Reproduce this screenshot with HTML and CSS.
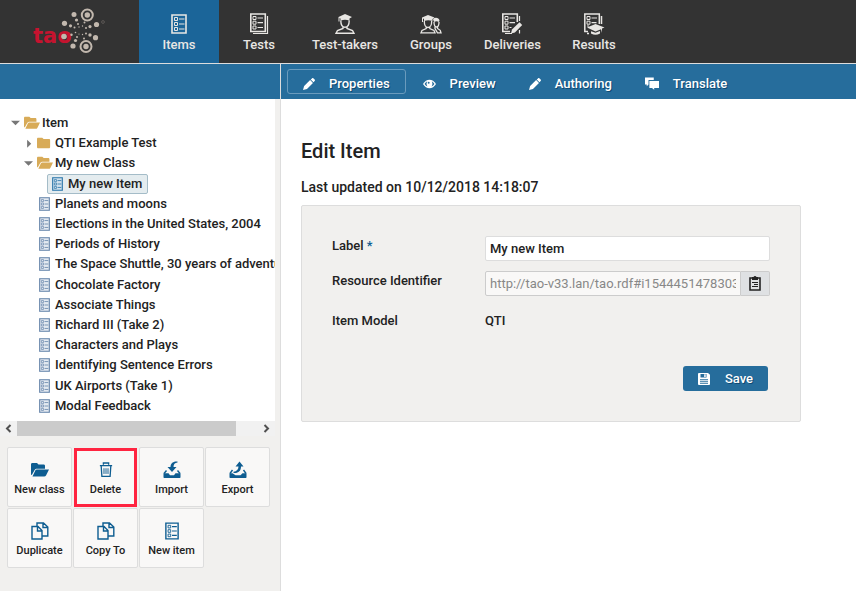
FILE: index.html
```html
<!DOCTYPE html>
<html lang="en">
<head>
<meta charset="utf-8">
<title>TAO - Items</title>
<link rel="stylesheet" href="styles.css">
</head>
<body>
<svg class="sprite" aria-hidden="true">
  <symbol id="list" viewBox="0 0 16 20"><path d="M1 1h14v18H1z" fill="none" stroke="currentColor" stroke-width="1.6"/><path d="M3.5 3.5h3v3h-3zM3.5 8.5h3v3h-3zM3.5 13.5h3v3h-3z" fill="none" stroke="currentColor"/><path d="M8 5h5.500M8 10h5.500M8 15h5.500" stroke="currentColor" stroke-width="1.200"/></symbol>
  <symbol id="tests" viewBox="0 0 20 22"><path d="M4 20.500h14.500V3" fill="none" stroke="currentColor" stroke-width="1.200"/><path d="M1.800 1h14.500v17.500H1.800z" fill="none" stroke="currentColor" stroke-width="1.600"/><path d="M4 3.500h3v3H4zM4 8.200h3v3H4zM4 13h3v3H4z" fill="none" stroke="currentColor"/><path d="M8.500 5h5.500M8.500 9.700h5.500M8.500 14.500h5.500" stroke="currentColor" stroke-width="1.200"/></symbol>
  <symbol id="taker" viewBox="0 0 20 20"><path d="M10 0l7 3-2.500 1.500v2.200c-3-1.200-6-1.200-9 0V4.500L4.500 4v3.500H3.500V3z" fill="currentColor"/><path d="M5.800 6.500c0 4 1.700 6.700 4.200 6.700s4.200-2.700 4.200-6.700M8 12.500v2L2.500 16.500l-1.500 2.800h18l-1.500-2.800-5.500-2v-2" fill="none" stroke="currentColor" stroke-width="1.400"/></symbol>
  <symbol id="groups" viewBox="0 0 22 20"><path d="M8 1l6.500 2.500L12.500 5v2C9.500 6 7 6 4 7V5L3 4.500V8H2V3.500z" fill="currentColor"/><path d="M13 5c2-2 6-1.500 6.500 1.500L19 8c-2-1-3-1-5 0" fill="currentColor"/><path d="M4.300 7c0 4 1.500 6.500 3.700 6.500S11.700 11 11.700 7M6.200 13v1.500L2 16.500l-1 2.300h14l-1-2.300-4.200-2V13M14 8c0 3 1 5 2.500 5S19 11 19 8M15 13v1.500l2.500 4.300H21l-.8-2.500-2.700-1.800V13" fill="none" stroke="currentColor" stroke-width="1.300"/></symbol>
  <symbol id="pencil" viewBox="0 0 16 16"><path d="M0 16l1.500-5.500L9.500 2.700 13.300 6.500l-8 8zM10.300 2L12 .6c.6-.6 1.400-.6 2 0l1.500 1.500c.6.6.6 1.400 0 2L14 5.700z" fill="currentColor"/></symbol>
  <symbol id="deliveries" viewBox="0 0 22 22"><path d="M4 20.500h7M18.500 3v5M18.500 17v3.500" fill="none" stroke="currentColor" stroke-width="1.200"/><path d="M16.300 9V1H1.800v17.500H9" fill="none" stroke="currentColor" stroke-width="1.600"/><path d="M4 3.500h3v3H4zM4 8.200h3v3H4zM4 13h3v3H4z" fill="none" stroke="currentColor"/><path d="M8.500 5h5.500M8.500 9.700h5.500M8.500 14.500h2" stroke="currentColor" stroke-width="1.200"/><path d="M10 20.500l1-4 7.500-7.200 2.700 2.700-7.300 7.500z" fill="currentColor"/></symbol>
  <symbol id="results" viewBox="0 0 22 22"><path d="M16.300 11V1H1.800v17.500H5M18.500 3v8M4 20.500h2" fill="none" stroke="currentColor" stroke-width="1.500"/><path d="M4 3.500h3v3H4zM4 8.200h3v3H4zM4 13h2" fill="none" stroke="currentColor"/><path d="M8.500 5h5.500M8.500 9.700h5" stroke="currentColor" stroke-width="1.200"/><path d="M12.500 11l9 3.500-2.500 1v4.500l-1-3.800-5.500 2.300-8.500-4zM8 18.200l4.500 1.500L17 18v2.500c-3 1.700-6 1.700-9 0z" fill="currentColor"/></symbol>
  <symbol id="eye" viewBox="0 0 16 12"><path d="M0 6c4-7 12-7 16 0-4 7-12 7-16 0z" fill="currentColor"/><path d="M2 6c.8-1.600 2-2.500 3.200-3-1.200 2-1 4.200.3 6C4 8.500 2.800 7.500 2 6zM14 6c-.8-1.600-2-2.500-3.200-3 1.200 2 1 4.200-.3 6 1.500-.5 2.700-1.500 3.500-3z" fill="#266d9c"/><circle cx="7" cy="4.500" r="1.200" fill="#266d9c"/></symbol>
  <symbol id="chat" viewBox="0 0 16 14"><path d="M0 0h10v3H4v5L2 10V8H0z" fill="currentColor"/><path d="M5 4h11v8h-5.500v2L8 12H5z" fill="currentColor"/></symbol>
  <symbol id="folder" viewBox="0 0 16 14"><path d="M1.500 1h4.500l1.500 1.500h6c1 0 1.500.5 1.500 1.500v7.500c0 1-.5 1.500-1.500 1.500h-12C.5 13 0 12.500 0 11.500v-9C0 1.500.5 1 1.500 1z" fill="currentColor"/></symbol>
  <symbol id="open" viewBox="0 0 18 14"><path d="M1.500 0h4.500l1.500 1.500h5c1 0 1.500.5 1.500 1.500v2.700H6c-1 0-1.800.4-2.400 1.300L.8 12C.3 12 0 11.500 0 11V1.500C0 .5.500 0 1.500 0z" fill="currentColor"/><path d="M5.800 6.500H18l-3 6c-.4.700-1 1-1.800 1H1.500l2.800-6c.4-.7.800-1 1.500-1z" fill="currentColor"/></symbol>
  <symbol id="trash" viewBox="0 0 16 18"><path d="M5 3V1h6v2M1 4h14M2.500 4.500l.8 11.700h9.400l.8-11.700" fill="none" stroke="currentColor" stroke-width="1.500"/><path d="M5.700 7v6.500M8 7v6.500M10.300 7v6.500" stroke="currentColor" stroke-width="1.100"/></symbol>
  <symbol id="import" viewBox="0 0 18 18"><path d="M14.500.5C10 0 7.500 2.500 7.500 6H4.500L9 11l4.500-5h-3c0-2.800 1.300-4.300 4-4.500z" fill="currentColor"/><path d="M3.500 9.500L1 12.500M14.500 9.500l2.500 3" fill="none" stroke="currentColor" stroke-width="1.400"/><path d="M.5 12.300h5l1.500 2h4l1.500-2h5V16c0 .7-.3 1-1 1h-15c-.7 0-1-.3-1-1z" fill="currentColor"/></symbol>
  <symbol id="export" viewBox="0 0 18 18"><path d="M4.500 12c4.700.5 7.500-2 7.500-6.500h2.500L10.500.5 6.500 5.500h3c0 3-1.700 4.800-5 5.300z" fill="currentColor"/><path d="M3.500 9L1 12.500M14.500 9l2.500 3.500" fill="none" stroke="currentColor" stroke-width="1.400"/><path d="M.5 12.300h3l3 2h5l2-2h4V16c0 .7-.3 1-1 1h-15c-.7 0-1-.3-1-1z" fill="currentColor"/></symbol>
  <symbol id="copy" viewBox="0 0 18 18"><path d="M1 4.500h6l4 4V17H1zM6.500 4.500V9H11M6 4V1h6.500l4.300 4v9H11M12 1v4.500h4.800" fill="none" stroke="currentColor" stroke-width="1.400"/></symbol>
  <symbol id="clip" viewBox="0 0 12 15"><path d="M1 2h10v12H1z" fill="none" stroke="currentColor" stroke-width="1.600"/><path d="M3 1h1.500c.5-1.300 2.500-1.300 3 0H9v3H3zM3 6h6v1H3zM5 8h4v1H5zM3 10h6v1H3z" fill="currentColor"/></symbol>
  <symbol id="save" viewBox="0 0 12 12"><path d="M1.200 0H10l2 1.700v9.100c0 .8-.4 1.200-1.200 1.200H1.200C.4 12 0 11.600 0 10.800V1.200C0 .4.400 0 1.200 0z" fill="currentColor"/><path d="M2.500 1h6v3.500h-6zM2 6.300h8V11H2z" fill="#266d9c"/><path d="M6.200 1.200h1.500V4H6.200zM2 7.200h8v1H2zM2 9.200h8v1H2z" fill="currentColor"/></symbol>
</svg>

<header class="top">
  <a class="logo" href="#" aria-label="TAO">
    <svg width="80" height="50" viewBox="30 5 80 50">
      <text x="33" y="43" class="logo-text">tao</text>
      <g fill="none" stroke="#c2b8ae" stroke-width="2"><circle cx="87.300" cy="15" r="5.500"/><circle cx="86" cy="46.500" r="5.500"/></g>
      <g fill="#c2b8ae"><circle cx="87.300" cy="15" r="2.700"/><circle cx="86" cy="46.500" r="2.700"/><circle cx="74" cy="14.500" r="2.500"/><circle cx="64.500" cy="23.300" r="2.600"/><circle cx="96.500" cy="24.500" r="2.600"/><circle cx="95.500" cy="37.700" r="2.600"/><circle cx="73" cy="46" r="2.600"/><circle cx="64" cy="36.500" r="2.800"/><circle cx="76.500" cy="20" r="1.600"/><circle cx="70.500" cy="25.800" r="1.600"/><circle cx="90" cy="26.600" r="1.600"/><circle cx="90" cy="35" r="1.700"/><circle cx="75.500" cy="40.500" r="1.600"/><circle cx="84.500" cy="22.500" r="1"/><circle cx="71.500" cy="34.700" r="1.200"/><circle cx="84" cy="38.500" r="1"/><circle cx="78" cy="24" r="1"/><circle cx="74.500" cy="27.500" r="1"/><circle cx="86" cy="28" r="1"/><circle cx="86" cy="33.500" r="1"/><circle cx="77" cy="37" r="1"/><circle cx="75.500" cy="32.500" r=".8"/><circle cx="82.500" cy="26" r=".7"/><circle cx="79" cy="27" r=".7"/><circle cx="82.500" cy="34.500" r=".7"/><circle cx="79" cy="34" r=".6"/></g>
      <circle cx="103" cy="22" r="1.400" fill="none" stroke="#6b6661" stroke-width=".7"/>
    </svg>
  </a>
  <nav class="menu">
    <a class="active" href="#"><svg width="16" height="20"><use href="#list"/></svg>Items</a>
    <a href="#"><svg width="20" height="22"><use href="#tests"/></svg>Tests</a>
    <a href="#"><svg width="20" height="20"><use href="#taker"/></svg>Test-takers</a>
    <a href="#"><svg width="22" height="20"><use href="#groups"/></svg>Groups</a>
    <a href="#"><svg width="22" height="22"><use href="#deliveries"/></svg>Deliveries</a>
    <a href="#"><svg width="22" height="22"><use href="#results"/></svg>Results</a>
  </nav>
</header>

<div class="shell">
  <aside class="side">
    <div class="side-bar"></div>
    <div class="tree-box">
      <ul class="tree">
        <li class="l0"><i class="down"></i><svg class="dir" width="16" height="14"><use href="#open"/></svg>Item</li>
        <li class="l1"><i class="right"></i><svg class="dir" width="14" height="14"><use href="#folder"/></svg>QTI Example Test</li>
        <li class="l1"><i class="down"></i><svg class="dir" width="16" height="14"><use href="#open"/></svg>My new Class</li>
        <li class="l2"><span class="picked"><svg class="doc" width="11" height="14"><use href="#list"/></svg>My new Item</span></li>
        <li class="leaf"><svg class="doc" width="11" height="14"><use href="#list"/></svg>Planets and moons</li>
        <li class="leaf"><svg class="doc" width="11" height="14"><use href="#list"/></svg>Elections in the United States, 2004</li>
        <li class="leaf"><svg class="doc" width="11" height="14"><use href="#list"/></svg>Periods of History</li>
        <li class="leaf"><svg class="doc" width="11" height="14"><use href="#list"/></svg>The Space Shuttle, 30 years of adventure</li>
        <li class="leaf"><svg class="doc" width="11" height="14"><use href="#list"/></svg>Chocolate Factory</li>
        <li class="leaf"><svg class="doc" width="11" height="14"><use href="#list"/></svg>Associate Things</li>
        <li class="leaf"><svg class="doc" width="11" height="14"><use href="#list"/></svg>Richard III (Take 2)</li>
        <li class="leaf"><svg class="doc" width="11" height="14"><use href="#list"/></svg>Characters and Plays</li>
        <li class="leaf"><svg class="doc" width="11" height="14"><use href="#list"/></svg>Identifying Sentence Errors</li>
        <li class="leaf"><svg class="doc" width="11" height="14"><use href="#list"/></svg>UK Airports (Take 1)</li>
        <li class="leaf"><svg class="doc" width="11" height="14"><use href="#list"/></svg>Modal Feedback</li>
      </ul>
      <div class="scroll" aria-hidden="true">
        <svg width="17" height="15"><path d="M10.500 4L7 7.500l3.500 3.500" fill="none" stroke="#505050" stroke-width="2"/></svg>
        <div class="track"><div class="thumb"></div></div>
        <svg width="17" height="15"><path d="M6.500 4L10 7.500 6.500 11" fill="none" stroke="#505050" stroke-width="2"/></svg>
      </div>
    </div>
    <div class="actions">
      <button type="button"><svg width="18" height="18" viewBox="0 -2 18 18"><use href="#open" width="18" height="14"/></svg>New class</button>
      <button type="button" class="marked"><svg width="14" height="18"><use href="#trash"/></svg>Delete</button>
      <button type="button"><svg width="18" height="18"><use href="#import"/></svg>Import</button>
      <button type="button"><svg width="18" height="18"><use href="#export"/></svg>Export</button>
      <button type="button"><svg width="18" height="18"><use href="#copy"/></svg>Duplicate</button>
      <button type="button"><svg width="18" height="18"><use href="#copy"/></svg>Copy To</button>
      <button type="button"><svg width="14" height="18"><use href="#list"/></svg>New item</button>
    </div>
  </aside>

  <main class="main">
    <nav class="tabs">
      <a class="current" href="#"><svg width="12" height="12"><use href="#pencil"/></svg>Properties</a>
      <a href="#"><svg width="13" height="10"><use href="#eye"/></svg>Preview</a>
      <a href="#"><svg width="12" height="12"><use href="#pencil"/></svg>Authoring</a>
      <a href="#"><svg width="14" height="13"><use href="#chat"/></svg>Translate</a>
    </nav>
    <section class="content">
      <h1>Edit Item</h1>
      <p class="updated">Last updated on 10/12/2018 14:18:07</p>
      <form class="form">
        <div class="field"><label for="label">Label <abbr title="Required">*</abbr></label><input id="label" type="text" value="My new Item"></div>
        <div class="field"><label for="uri">Resource Identifier</label><div class="group"><input id="uri" type="text" readonly value="http://tao-v33.lan/tao.rdf#i15444514783036"><button type="button" aria-label="Copy to clipboard"><svg width="12" height="15"><use href="#clip"/></svg></button></div></div>
        <div class="field"><span>Item Model</span><span>QTI</span></div>
        <div class="submit"><button type="submit"><svg width="12" height="12"><use href="#save"/></svg>Save</button></div>
      </form>
    </section>
  </main>
</div>
</body>
</html>
```
FILE: styles.css
```css
* { box-sizing: border-box; }
body {
  margin: 0;
  min-height: 100vh;
  display: flex;
  flex-direction: column;
  font: 500 13px/20px Roboto, "Liberation Sans", sans-serif;
  color: #222;
  background: #fff;
}
a { color: inherit; text-decoration: none; }
button, input { font: inherit; color: inherit; margin: 0; }
svg { display: block; flex: none; }
.sprite { position: absolute; width: 0; height: 0; }

.top {
  display: flex;
  height: 64px;
  background: #333;
  border-bottom: 1px solid #ddd;
  color: #e8e6e3;
}
.logo { width: 139px; padding: 5px 0 0 30px; }
.logo-text { font: bold 21px "DejaVu Sans", sans-serif; fill: #c5132f; }
.menu { display: flex; }
.menu a {
  min-width: 80px;
  padding: 13px 13px 0;
  display: flex;
  flex-direction: column;
  align-items: center;
  line-height: 16px;
}
.menu svg { margin-bottom: 2px; height: 22px; }
.menu .active { background: #1b6599; }

.shell { flex: 1; display: flex; }
.side {
  width: 281px;
  flex: none;
  border-right: 1px solid #ddd;
  background: #f1f0ee;
}
.side-bar { height: 35px; background: #266d9c; }
.tree-box { margin-right: 5px; background: #fff; }
.tree {
  list-style: none;
  margin: 0;
  padding: 14px 0 5px;
  height: 322px;
  display: grid;
  grid-auto-rows: 1fr;
  overflow: hidden;
}
.tree li { display: flex; align-items: center; white-space: nowrap; }
.l0 { padding-left: 11px; }
.l1 { padding-left: 24px; }
.l2 { padding-left: 47px; }
.leaf { padding-left: 39px; }
.dir { color: #d8ab58; margin: 0 2px 0 4px; }
.right + .dir { margin-right: 4px; }
.doc { color: #6685aa; background: #e3e9f0; margin-right: 5px; }
.down, .right { width: 9px; height: 9px; background: #777; }
.down { clip-path: polygon(0 25%, 100% 25%, 50% 75%); }
.right { clip-path: polygon(35% 10%, 80% 55%, 35% 100%); }
.picked {
  display: flex;
  align-items: center;
  height: 20px;
  padding: 0 5px 0 4px;
  border: 1px solid #a4bcc8;
  border-radius: 2px;
  background: #e4ecef;
}
.picked .doc { color: #2b76a9; background: #cfe0ec; }
.scroll { display: flex; height: 15px; background: #f1f1f1; }
.track { flex: 1; }
.thumb { width: 91%; height: 100%; background: #cbcbcb; }

.actions {
  display: grid;
  grid-template-columns: repeat(4, 65px);
  grid-auto-rows: 60px;
  gap: 1px;
  padding: 11px 7px;
}
.actions button {
  display: flex;
  flex-direction: column;
  align-items: center;
  justify-content: center;
  gap: 4px;
  padding: 3px 0 0;
  border: 1px solid #ddd;
  border-radius: 2px;
  background: #f9f8f7;
  font-size: 11px;
  line-height: 14px;
}
.actions svg { color: #0e5d91; }
.actions .marked { margin: 1px 1px 0; padding-top: 2px; border: 3px solid #ff2440; border-radius: 0; }

.main { flex: 1; min-width: 0; }
.tabs {
  display: flex;
  align-items: center;
  gap: 1px;
  height: 35px;
  padding: 0 6px;
  background: #266d9c;
  color: #fff;
  text-shadow: 1px 1px 0 #0f4a73;
}
.tabs a {
  display: flex;
  align-items: center;
  gap: 14px;
  height: 25px;
  padding: 4px 15px 0;
  border: 1px solid transparent;
  border-radius: 3px;
}
.tabs .current { border-color: #6a9bbd; }
.content { padding: 40px 20px; }
h1 { margin: 0 0 14px; font-size: 20px; line-height: 24px; font-weight: 500; }
.updated { margin: 0 0 8px; font-size: 14px; }
.form {
  max-width: 500px;
  padding: 30px;
  border: 1px solid #ddd;
  border-radius: 2px;
  background: #f1f0ee;
}
.field {
  display: grid;
  grid-template-columns: 153px 1fr;
  min-height: 25px;
  margin-bottom: 10px;
}
abbr { color: #0e5d91; text-decoration: none; }
.field input {
  width: 100%;
  min-width: 0;
  height: 25px;
  padding: 0 4px;
  border: 1px solid #ddd;
  border-radius: 2px;
  background: #fff;
}
.group { display: flex; }
.field .group input { color: #888; background: #f9f8f7; font-weight: 400; border-color: #ccc; border-radius: 2px 0 0 2px; }
.group button {
  width: 29px;
  flex: none;
  height: 25px;
  padding: 0;
  display: grid;
  place-items: center;
  border: 1px solid #ccc;
  border-left: 0;
  border-radius: 0 2px 2px 0;
  background: #dfe1e3;
}
.field:nth-child(3) { padding-top: 5px; }
.submit { display: flex; justify-content: flex-end; padding: 25px 2px 0; }
.submit button {
  display: flex;
  align-items: center;
  gap: 15px;
  height: 25px;
  padding: 0 15px;
  border: 0;
  border-radius: 3px;
  background: #266d9c;
  color: #fff;
  text-shadow: 1px 1px 0 #0f4a73;
}
```
